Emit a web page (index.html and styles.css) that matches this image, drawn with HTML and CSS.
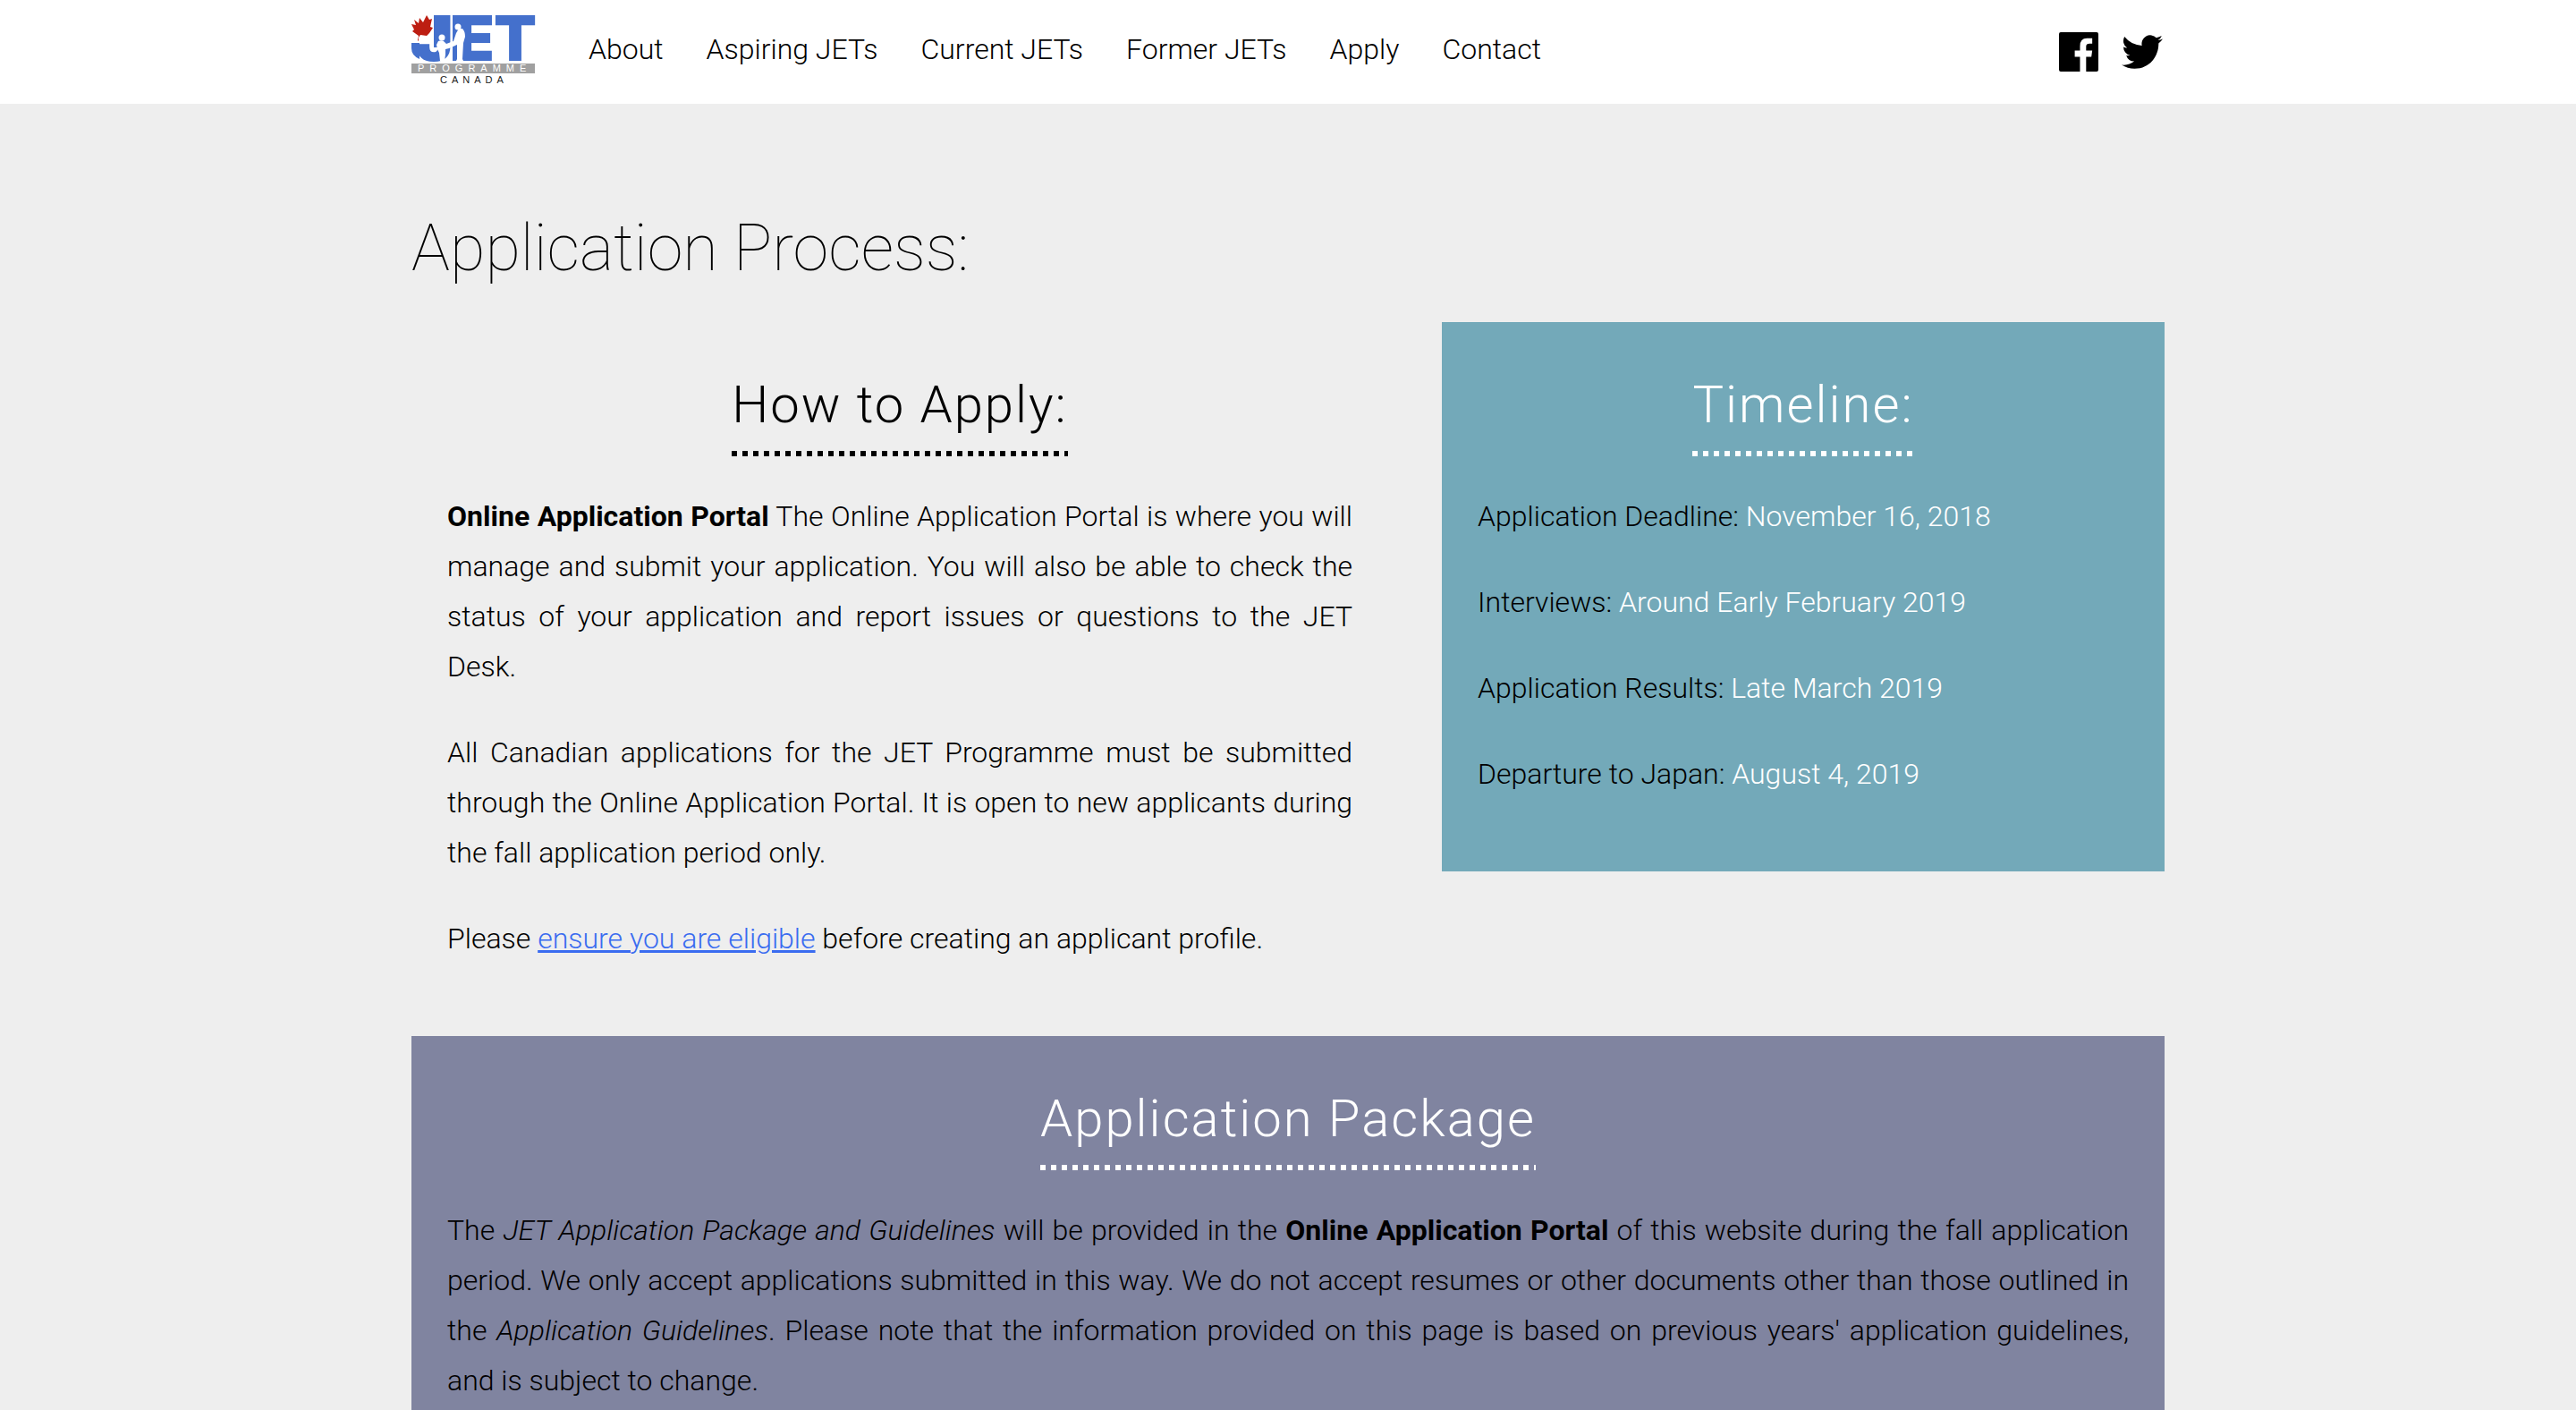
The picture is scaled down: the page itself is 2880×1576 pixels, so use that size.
FILE: index.html
```html
<!DOCTYPE html>
<html lang="en">
<head>
<meta charset="utf-8">
<title>Application Process | JET Programme Canada</title>
<link rel="stylesheet" href="styles.css">
</head>
<body>
<header class="site-header">
  <div class="container header-inner">
    <a class="logo" href="#" aria-label="JET Programme Canada home">
      <svg class="logo-art" viewBox="0 0 138 78">
        <g class="logo-jet">
          <text x="5" y="51">J</text>
          <text x="50" y="51">E</text>
          <text x="92" y="51">T</text>
          <path d="M0 31h9v18q-9-4-9-12zM25 0h8v36h-8zM46 0h10v51h-10z"/>
        </g>
        <rect y="54" width="138" height="11" fill="#a0a0a0"/>
        <text class="logo-programme" x="7" y="63">PROGRAMME</text>
        <text class="logo-canada" x="32" y="76">CANADA</text>
        <g fill="#fff">
          <circle cx="34" cy="25" r="3.500"/>
          <path d="M30 29q5-2 7 1l2 2 8-3 3-9 3-5 4 0q3 3 3 9l-2 7-1 18 1 2h-8l1-2 0-16-9 4-4 1v6l-1 7h-5l-1-9-2-4-1-5z"/>
          <circle cx="52" cy="13" r="3.500"/>
        </g>
        <path fill="#bd1e12" d="M17 0L20 5 23 4 21 13 24 14 20 20 17 23 10 22 8 25 8 29 7 28 8 23 1 18 3 16 0 10 5 11 3 5 8 9 9 3 13 8z"/>
      </svg>
    </a>
    <nav class="main-nav">
      <a href="#">About</a>
      <a href="#">Aspiring JETs</a>
      <a href="#">Current JETs</a>
      <a href="#">Former JETs</a>
      <a href="#">Apply</a>
      <a href="#">Contact</a>
    </nav>
    <div class="social">
      <a href="#" aria-label="Facebook">
        <svg viewBox="0 0 45 45" width="44" height="44"><path d="M2 0H43q2 0 2 2V43q0 2-2 2H31V28h6l1-7h-7v-5q0-3 4-3h3V7h-6q-8 0-8 9v5h-6v7h6v17H2q-2 0-2-2V2q0-2 2-2z"/></svg>
      </a>
      <a href="#" aria-label="Twitter">
        <svg viewBox="0 0 46 38" width="46" height="38"><path d="M46 4.500a19 19 0 0 1-5.400 1.500A9.400 9.400 0 0 0 44.800 1a19 19 0 0 1-6 2.200A9.500 9.500 0 0 0 22.700 12 27 27 0 0 1 3.200 2 9.500 9.500 0 0 0 6.200 14.600 9.300 9.300 0 0 1 2 13.400a9.500 9.500 0 0 0 7.500 9.400 9.500 9.500 0 0 1-4.300.2 9.500 9.500 0 0 0 8.900 6.600A19 19 0 0 1 0 33.500 26.800 26.800 0 0 0 14.500 37.800C32 37.800 41.600 23.300 41.300 9.400A19 19 0 0 0 46 4.500z"/></svg>
      </a>
    </div>
  </div>
</header>

<main class="container">
  <h1>Application Process:</h1>
  <div class="columns">
    <section class="panel">
      <h2>How to Apply:</h2>
      <p><strong>Online Application Portal</strong> The Online Application Portal is where you will manage and submit your application. You will also be able to check the status of your application and report issues or questions to the JET Desk.</p>
      <p>All Canadian applications for the JET Programme must be submitted through the Online Application Portal. It is open to new applicants during the fall application period only.</p>
      <p>Please <a class="text-link" href="#">ensure you are eligible</a> before creating an applicant profile.</p>
    </section>
    <section class="panel timeline">
      <h2>Timeline:</h2>
      <p>Application Deadline: <span class="date">November 16, 2018</span></p>
      <p>Interviews: <span class="date">Around Early February 2019</span></p>
      <p>Application Results: <span class="date">Late March 2019</span></p>
      <p>Departure to Japan: <span class="date">August 4, 2019</span></p>
    </section>
  </div>
  <section class="panel package">
    <h2>Application Package</h2>
    <p>The <em>JET Application Package and Guidelines</em> will be provided in the <strong>Online Application Portal</strong> of this website during the fall application period. We only accept applications submitted in this way. We do not accept resumes or other documents other than those outlined in the <em>Application Guidelines</em>. Please note that the information provided on this page is based on previous years' application guidelines, and is subject to change.</p>
  </section>
</main>
</body>
</html>
```
FILE: styles.css
```css
* { box-sizing: border-box; }

body {
  margin: 0;
  background: #eee;
  color: #000;
  font-family: Roboto, "Liberation Sans", sans-serif;
  font-size: 32px;
  font-weight: 300;
  line-height: 56px;
}

a { color: inherit; text-decoration: none; }

strong { font-weight: 700; }

.container {
  max-width: 1960px;
  margin: 0 auto;
}

.site-header { background: #fff; }

.header-inner {
  display: flex;
  align-items: center;
  height: 116px;
}

.logo {
  padding-bottom: 4px;
  line-height: 0;
}

.logo-art {
  width: 138px;
  height: 78px;
  overflow: visible;
}

.logo-jet {
  fill: #4470cc;
  font-family: Inter, sans-serif;
  font-size: 70px;
  font-weight: 900;
}

.logo-programme,
.logo-canada {
  font-family: "Liberation Sans", Arial, sans-serif;
  font-size: 11px;
  font-weight: 400;
}

.logo-programme { fill: #fff; letter-spacing: 6px; }
.logo-canada { fill: #222; letter-spacing: 5px; }

.main-nav {
  display: flex;
  gap: 48px;
  margin-left: 60px;
  padding-bottom: 6px;
}

.social {
  display: flex;
  align-items: center;
  gap: 26px;
  margin-left: auto;
  margin-right: 2px;
  line-height: 0;
}

h1 {
  margin: 0;
  padding: 112px 0 32px;
  font-size: 72px;
  font-weight: 100;
  line-height: 100px;
}

h2 {
  width: fit-content;
  margin: 0 auto 39px;
  padding-bottom: 6px;
  /* square dots along the bottom edge */
  background: repeating-linear-gradient(to right, currentColor 0 6px, transparent 6px 12px) left bottom / 100% 6px no-repeat;
  font-size: 58px;
  font-weight: 300;
  line-height: 104px;
  letter-spacing: 2px;
}

p { margin: 0 0 40px; }

.columns {
  display: grid;
  grid-template-columns: 273fr 202fr;
  align-items: start;
  gap: 60px;
}

.panel {
  padding: 40px 40px 41px;
  text-align: justify;
}

.timeline { background: #73a9b9; }

.timeline h2,
.package h2,
.date { color: #fff; }

.package { background: #8084a0; }

.text-link {
  color: #3a6cf0;
  text-decoration: underline;
}
```
